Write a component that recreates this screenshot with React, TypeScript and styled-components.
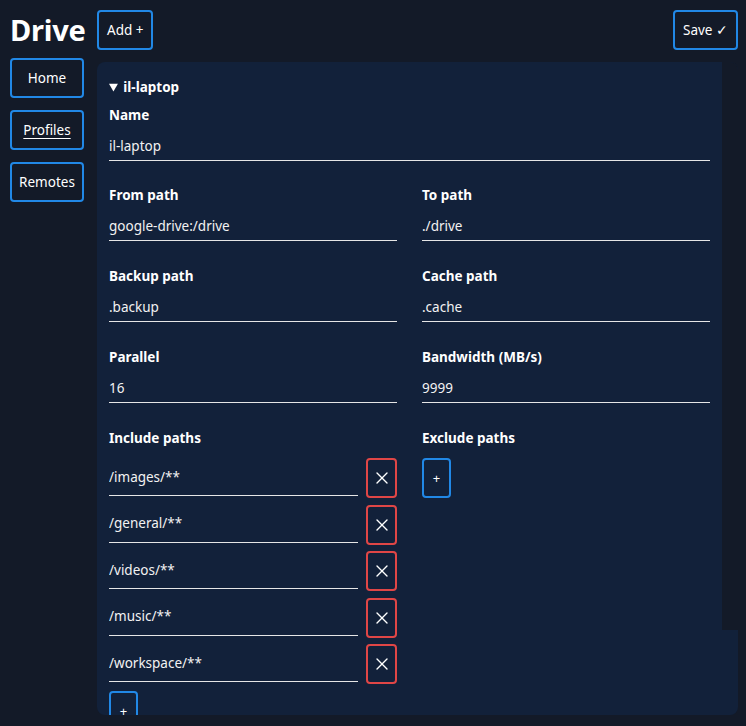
import styled, { createGlobalStyle } from "styled-components"

const includePaths = ["/images/**", "/general/**", "/videos/**", "/music/**", "/workspace/**"]

function CloseIcon() {
    return (
        <svg width="14" height="14" viewBox="0 0 14 14" fill="none" stroke="currentColor" strokeWidth="1.4" strokeLinecap="round">
            <line x1="2" y1="2" x2="12" y2="12" />
            <line x1="12" y1="2" x2="2" y2="12" />
        </svg>
    )
}

export default function App() {
    return (
        <>
            <GlobalStyle />
            <Page>
                <Title>Drive</Title>
                <Toolbar>
                    <OutlineButton>Add +</OutlineButton>
                    <OutlineButton>Save ✓</OutlineButton>
                </Toolbar>
                <Nav>
                    <NavButton>Home</NavButton>
                    <NavButton $active>Profiles</NavButton>
                    <NavButton>Remotes</NavButton>
                </Nav>
                <Panel>
                    <Content>
                        <Profile open>
                            <Summary>il-laptop</Summary>
                            <Field>
                                <Label>Name</Label>
                                <TextInput defaultValue="il-laptop" />
                            </Field>
                            <FieldGrid>
                                <Field>
                                    <Label>From path</Label>
                                    <TextInput defaultValue="google-drive:/drive" />
                                </Field>
                                <Field>
                                    <Label>To path</Label>
                                    <TextInput defaultValue="./drive" />
                                </Field>
                                <Field>
                                    <Label>Backup path</Label>
                                    <TextInput defaultValue=".backup" />
                                </Field>
                                <Field>
                                    <Label>Cache path</Label>
                                    <TextInput defaultValue=".cache" />
                                </Field>
                                <Field>
                                    <Label>Parallel</Label>
                                    <TextInput defaultValue="16" />
                                </Field>
                                <Field>
                                    <Label>Bandwidth (MB/s)</Label>
                                    <TextInput defaultValue="9999" />
                                </Field>
                                <Field>
                                    <Label>Include paths</Label>
                                    <PathList>
                                        {includePaths.map(path =>
                                            <PathRow key={path}>
                                                <PathInput defaultValue={path} />
                                                <RemoveButton aria-label="remove"><CloseIcon /></RemoveButton>
                                            </PathRow>
                                        )}
                                        <SmallButton>+</SmallButton>
                                    </PathList>
                                </Field>
                                <Field>
                                    <Label>Exclude paths</Label>
                                    <PathList>
                                        <SmallButton>+</SmallButton>
                                    </PathList>
                                </Field>
                            </FieldGrid>
                        </Profile>
                    </Content>
                    <Gutter />
                </Panel>
            </Page>
        </>
    )
}

const GlobalStyle = createGlobalStyle`
    html, body {
        margin: 0;
        background: #131a28;
        color: #ffffff;
        font-family: "Noto Sans", "Open Sans", sans-serif;
        font-size: 13.5px;
    }
    * {
        box-sizing: border-box;
    }
`

const Page = styled.div`
    display: grid;
    grid-template-columns: 75px 1fr;
    grid-template-rows: 40px auto;
    column-gap: 12px;
    padding: 10px 8px 11px 10px;
    height: 726px;
`

const Title = styled.h1`
    margin: 0;
    font-size: 29px;
    line-height: 40px;
    font-weight: 700;
    letter-spacing: -0.2px;
`

const Toolbar = styled.div`
    display: flex;
    justify-content: space-between;
    align-items: stretch;
`

const OutlineButton = styled.button`
    height: 40px;
    padding: 0 8px;
    background: transparent;
    color: #ffffff;
    font: inherit;
    font-size: 13.5px;
    border: 2px solid #2188e6;
    border-radius: 4px;
`

const Nav = styled.nav`
    display: flex;
    flex-direction: column;
    gap: 12px;
    margin-top: 8px;
`

const NavButton = styled(OutlineButton)<{ $active?: boolean }>`
    width: 74px;
    padding: 0;
    text-decoration: ${p => (p.$active ? "underline" : "none")};
    text-underline-offset: 3px;
`

const Panel = styled.section`
    display: grid;
    grid-template-columns: 1fr 16px;
    margin-top: 12px;
    height: 653px;
    overflow: hidden;
    background: #12213a;
    border-radius: 8px;
`

const Content = styled.div`
    padding: 15px 12px 0;
`

const Gutter = styled.div`
    height: 568px;
    background: #131a28;
`

const Profile = styled.details`
    display: flex;
    flex-direction: column;
`

const Summary = styled.summary`
    font-weight: 700;
    line-height: 20px;
    margin-bottom: 8px;
    cursor: pointer;
`

const FieldGrid = styled.div`
    display: grid;
    grid-template-columns: 1fr 1fr;
    column-gap: 25px;
    row-gap: 25px;
    margin-top: 24px;
`

const Field = styled.div`
    display: flex;
    flex-direction: column;
    gap: 8px;
`

const Label = styled.label`
    font-weight: 700;
    line-height: 20px;
`

const TextInput = styled.input`
    height: 28px;
    padding: 0 0 1px;
    background: transparent;
    border: 0;
    border-bottom: 1px solid #e6e6e6;
    color: #f2f2f2;
    font: inherit;
    outline: none;
`

const PathList = styled.div`
    display: flex;
    flex-direction: column;
    align-items: flex-start;
    gap: 6.5px;
    margin-top: 2px;
`

const PathRow = styled.div`
    display: flex;
    align-items: flex-start;
    gap: 8px;
    width: 100%;
`

const PathInput = styled(TextInput)`
    flex: 1;
    height: 38px;
    padding: 0;
`

const RemoveButton = styled.button`
    display: flex;
    align-items: center;
    justify-content: center;
    width: 31px;
    height: 40px;
    padding: 0;
    background: transparent;
    color: #ffffff;
    border: 2px solid #e04646;
    border-radius: 4px;
`

const SmallButton = styled.button`
    width: 29px;
    height: 40px;
    padding: 0;
    background: transparent;
    color: #ffffff;
    font: inherit;
    font-size: 13px;
    border: 2px solid #2188e6;
    border-radius: 4px;
`
